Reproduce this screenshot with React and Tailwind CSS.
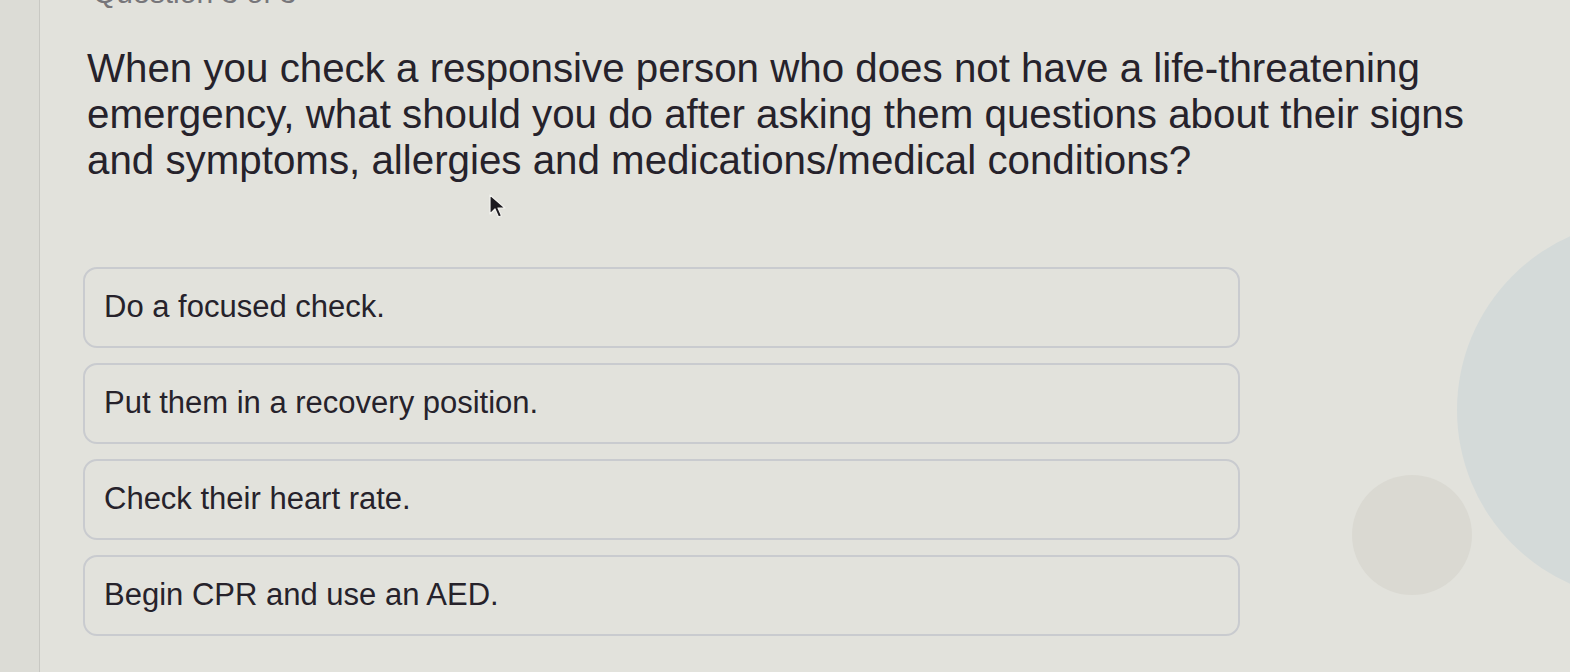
const options = [
  'Do a focused check.',
  'Put them in a recovery position.',
  'Check their heart rate.',
  'Begin CPR and use an AED.',
];

const Cursor = () => (
  <svg width="20" height="28" viewBox="0 0 20 28" className="absolute left-[488px] top-[193px]">
    <path d="M2 2 L2 21 L7 16 L10.5 24 L13.5 22.7 L10 15 L17 15 Z" fill="#1c1a1f" stroke="#f2f2ee" strokeWidth="1.2" strokeLinejoin="round" />
  </svg>
);

export default function App() {
  return (
    <div
      className="relative flex w-[1570px] h-[672px] overflow-hidden bg-[#e2e2dc] text-[#26222b]"
      style={{ fontFamily: '"Liberation Sans", Arial, sans-serif' }}
    >
      {/* decorative circles */}
      <div className="absolute left-[1457px] top-[220px] w-[380px] h-[380px] rounded-full bg-[#d4dad9]" />
      <div className="absolute left-[1352px] top-[475px] w-[120px] h-[120px] rounded-full bg-[#dad9d2]" />

      {/* left rail */}
      <div className="w-[40px] shrink-0 bg-[#dcdcd6] border-r border-[#c8c8c3]" />

      <div className="relative flex-1 pl-[47px]">
        <div className="mt-[-19px] h-[24px] pl-[6px] text-[30px] leading-[24px] text-[#77767a]">Question 3 of 3</div>

        <p className="mt-[41px] w-[1400px] text-[40.3px] leading-[46px]">
          When you check a responsive person who does not have a life-threatening emergency, what should you do after
          asking them questions about their signs and symptoms, allergies and medications/medical conditions?
        </p>

        <div className="mt-[83px] ml-[-4px] flex w-[1157px] flex-col gap-[15px]">
          {options.map((o) => (
            <div
              key={o}
              className="flex h-[81px] items-center rounded-[14px] border-2 border-[#c9cbcf] px-[19px] text-[31px]"
            >
              {o}
            </div>
          ))}
        </div>
      </div>

      <Cursor />
    </div>
  );
}
